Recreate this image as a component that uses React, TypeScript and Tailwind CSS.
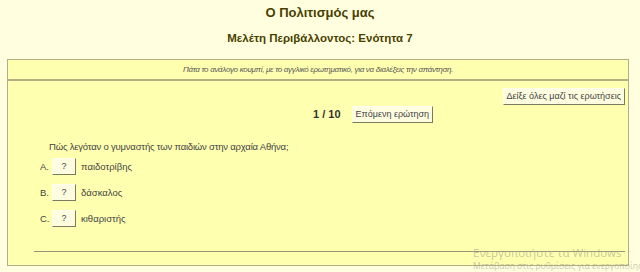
const options = [
  { key: "A.", label: "παιδοτρίβης" },
  { key: "B.", label: "δάσκαλος" },
  { key: "C.", label: "κιθαριστής" },
] as const;

const btn =
  "h-[17px] border border-t-[#fffff0] border-l-[#fffff0] border-r-[#7a7a60] border-b-[#7a7a60] bg-[#fffde0] px-[3px] text-[9px] leading-none text-[#444]";

export default function App() {
  return (
    <div className="relative min-h-[272px] w-[640px] overflow-hidden bg-[#ffffe0] font-['Liberation_Sans',Arial,sans-serif] text-[#333]">
      {/* Headings */}
      <div className="pt-[4px] text-center">
        <h1 className="text-[13px] font-bold leading-[18px] text-[#4a3f00]">Ο Πολιτισμός μας</h1>
        <h2 className="mt-[8px] text-[11.5px] font-bold leading-[16px] text-[#4a3f00]">
          Μελέτη Περιβάλλοντος: Ενότητα 7
        </h2>
      </div>

      {/* Quiz panel */}
      <div className="ml-[7px] mt-[13px] w-[622px] border border-[#b5ad85]">
        <div className="flex h-[21px] items-center justify-center border-b-2 border-[#b5ad85] bg-[#ffffb0] text-[8px] italic tracking-[-0.3px] text-[#555]">
          Πάτα το ανάλογο κουμπί, με το αγγλικό ερωτηματικό, για να διαλέξεις την απάντηση.
        </div>
        <div className="bg-[#ffffb0] pb-[13px]">
          <div className="flex justify-end pr-[3px] pt-[7px]">
            <button className={btn}>Δείξε όλες μαζί τις ερωτήσεις</button>
          </div>
          <div className="flex items-center pl-[305px] pt-[1px]">
            <span className="text-[11px] font-bold text-[#333]">1 / 10</span>
            <button className={`${btn} ml-[11px]`}>Επόμενη ερώτηση</button>
          </div>

          <p className="mt-[17px] pl-[41px] text-[9.5px] tracking-[-0.2px] text-[#444]">
            Πώς λεγόταν ο γυμναστής των παιδιών στην αρχαία Αθήνα;
          </p>

          <div className="mt-[4px] flex flex-col gap-[9px] pl-[32px]">
            {options.map((o) => (
              <div key={o.key} className="flex items-center text-[9.5px] text-[#444]">
                <span className="w-[12px]">{o.key}</span>
                <button className={`${btn} w-[24px] px-0`}>?</button>
                <span className="ml-[5px]">{o.label}</span>
              </div>
            ))}
          </div>

          <div className="ml-[26px] mr-[3px] mt-[24px] border-t border-[#9d9675]" />
        </div>
      </div>

      {/* Windows activation watermark */}
      <div className="pointer-events-none absolute left-[473px] top-[245px] whitespace-nowrap font-['Open_Sans',sans-serif] text-[#9f9f8a]/60">
        <div className="text-[11.5px] leading-[15px]">Ενεργοποιήστε τα Windows</div>
        <div className="text-[8.5px] leading-[11px]">Μετάβαση στις ρυθμίσεις για ενεργοποίηση των Windows.</div>
      </div>
    </div>
  );
}
